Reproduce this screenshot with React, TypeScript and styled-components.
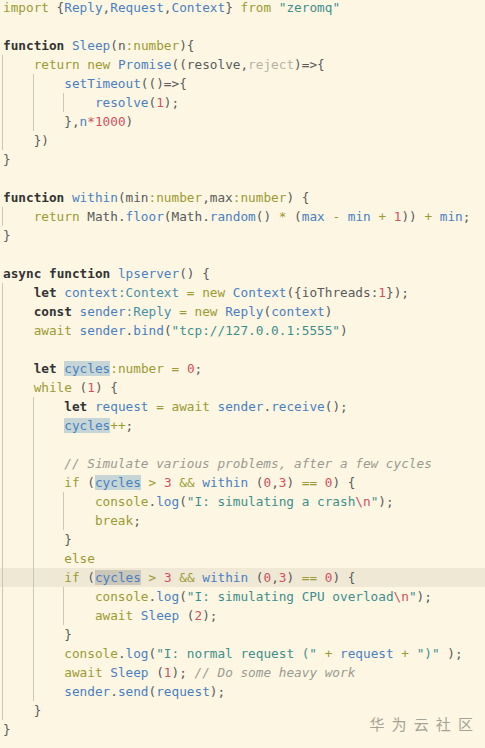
import React from "react";
import styled, { createGlobalStyle, css } from "styled-components";

const Global = createGlobalStyle`
  html, body { margin: 0; padding: 0; background: #fdf6e3; }
  #root { min-height: 748px; }
`;

type Kind = "k" | "d" | "i" | "s" | "n" | "c" | "p" | "o" | "t" | "u" | "h";

const colors: Record<Kind, string> = {
  k: "#9c9a33",
  d: "#333333",
  i: "#4a80c0",
  s: "#3d8f8d",
  n: "#d0505e",
  c: "#9b9a92",
  p: "#5a5a5a",
  o: "#9c9a33",
  t: "#4a90a6",
  u: "#b8b3a4",
  h: "#4a80c0",
};

const Page = styled.div`
  position: relative;
  width: 485px;
  height: 748px;
  overflow: hidden;
  background: #fdf6e3;
`;

const Code = styled.div`
  display: flex;
  flex-direction: column;
  margin-top: -2.5px;
  font-family: "DejaVu Sans Mono", "Liberation Mono", monospace;
  font-size: 12.72px;
  color: #5a5a5a;
`;

const Line = styled.div<{ $current?: boolean }>`
  position: relative;
  height: 19px;
  line-height: 19px;
  padding-left: 3px;
  white-space: pre;
  background: ${(p) => (p.$current ? "#eee8d5" : "transparent")};
`;

const Guide = styled.span<{ $col: number }>`
  position: absolute;
  top: 0;
  bottom: 0;
  width: 1px;
  left: calc(${(p) => p.$col}ch + 2px);
  background: #cbc6b6;
`;

const Tok = styled.span<{ $k: Kind; $current?: boolean }>`
  color: ${(p) => colors[p.$k]};
  ${(p) => p.$k === "d" && css`font-weight: bold;`}
  ${(p) => p.$k === "c" && css`font-style: italic;`}
  ${(p) =>
    p.$k === "h" &&
    css`
      background: ${p.$current ? "#ccc8b9" : "#c6d6d6"};
    `}
`;

const Watermark = styled.div`
  position: absolute;
  right: 5px;
  top: 716px;
  font-family: "Noto Sans CJK SC", sans-serif;
  font-size: 15px;
  line-height: 15px;
  letter-spacing: 7.1px;
  color: #a6a396;
`;

const cond =
  "k:if|p: (|h:cycles|p: |o:>|p: |n:3|p: |o:&&|p: |i:within|p: (|n:0|p:,|n:3|p:) |o:==|p: |n:0|p:) {";

const src: [string, number, boolean?][] = [
  ['k:import|p: {|i:Reply|p:,|i:Request|p:,|i:Context|p:} |k:from|p: |s:"zeromq"', 0],
  ["", 0],
  ["d:function|p: |i:Sleep|p:(n|o::number|p:){", 0],
  ["p:    |k:return|p: |k:new|p: |i:Promise|p:((resolve,|u:reject|p:)=>{", 1],
  ["p:        |i:setTimeout|p:(()=>{", 2],
  ["p:            |i:resolve|p:(|n:1|p:);", 3],
  ["p:        },|i:n|n:*|n:1000|p:)", 2],
  ["p:    })", 1],
  ["p:}", 0],
  ["", 0],
  ["d:function|p: |i:within|p:(min|o::number|p:,max|o::number|p:) {", 0],
  [
    "p:    |k:return|p: Math.|i:floor|p:(Math.|i:random|p:() |o:*|p: (|i:max|p: |o:-|p: |i:min|p: |o:+|p: |n:1|p:)) |o:+|p: |i:min|p:;",
    1,
  ],
  ["p:}", 0],
  ["", 0],
  ["d:async|p: |d:function|p: |i:lpserver|p:() {", 0],
  ["p:    |d:let|p: |i:context|t::Context|p: |o:=|p: |k:new|p: |i:Context|p:({ioThreads:|n:1|p:});", 1],
  ["p:    |d:const|p: |i:sender|t::Reply|p: |o:=|p: |k:new|p: |i:Reply|p:(|i:context|p:)", 1],
  ['p:    |k:await|p: |i:sender|p:.|i:bind|p:(|s:"tcp://127.0.0.1:5555"|p:)', 1],
  ["", 1],
  ["p:    |d:let|p: |h:cycles|o::number|p: |o:=|p: |n:0|p:;", 1],
  ["p:    |k:while|p: (|n:1|p:) {", 1],
  ["p:        |d:let|p: |i:request|p: |o:=|p: |k:await|p: |i:sender|p:.|i:receive|p:();", 2],
  ["p:        |h:cycles|o:++|p:;", 2],
  ["", 2],
  ["p:        |c:// Simulate various problems, after a few cycles", 2],
  ["p:        |" + cond, 2],
  ['p:            |k:console|p:.|i:log|p:(|s:"I: simulating a crash|n:\\n|s:"|p:);', 3],
  ["p:            |k:break|p:;", 3],
  ["p:        }", 2],
  ["p:        |k:else", 2],
  ["p:        |" + cond, 2, true],
  ['p:            |k:console|p:.|i:log|p:(|s:"I: simulating CPU overload|n:\\n|s:"|p:);', 3],
  ["p:            |k:await|p: |i:Sleep|p: (|n:2|p:);", 3],
  ["p:        }", 2],
  [
    'p:        |k:console|p:.|i:log|p:(|s:"I: normal request ("|p: |o:+|p: |i:request|p: |o:+|p: |s:")"|p: );',
    2,
  ],
  ["p:        |k:await|p: |i:Sleep|p: (|n:1|p:); |c:// Do some heavy work", 2],
  ["p:        |i:sender|p:.|i:send|p:(|i:request|p:);", 2],
  ["p:    }", 1],
  ["p:}", 0],
];

function parse(line: string): { k: Kind; text: string }[] {
  if (!line) return [];
  return line.split("|").map((seg) => ({ k: seg[0] as Kind, text: seg.slice(2) }));
}

export default function App() {
  return (
    <Page>
      <Global />
      <Code>
        {src.map(([text, guides, current], i) => (
          <Line key={i} $current={current}>
            {Array.from({ length: guides }, (_, g) => (
              <Guide key={g} $col={g * 4} />
            ))}
            {parse(text).map((t, j) => (
              <Tok key={j} $k={t.k} $current={current}>
                {t.text}
              </Tok>
            ))}
            {text === "" ? " " : null}
          </Line>
        ))}
      </Code>
      <Watermark>华为云社区</Watermark>
    </Page>
  );
}
